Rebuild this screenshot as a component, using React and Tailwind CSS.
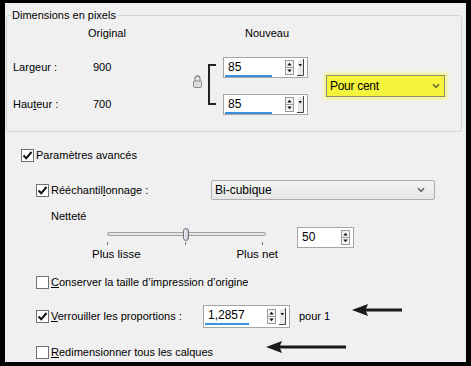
import React from "react";

function Check({ checked }) {
  return (
    <span className="w-[13px] h-[13px] border border-[#707070] bg-white flex items-center justify-center shrink-0">
      {checked && (
        <svg width="11" height="11" viewBox="0 0 11 11">
          <path d="M1.5 5.5 L4.2 8.3 L9.5 2" fill="none" stroke="#111" strokeWidth="2" />
        </svg>
      )}
    </span>
  );
}

function UpDown() {
  return (
    <svg width="9" height="15" viewBox="0 0 9 15" className="shrink-0">
      <rect x="0.5" y="0.5" width="8" height="14" fill="#f4f4f4" stroke="#9a9a9a" />
      <line x1="1" y1="7.5" x2="8" y2="7.5" stroke="#9a9a9a" />
      <path d="M2.3 5.5 L4.5 2.8 L6.7 5.5 Z" fill="#111" />
      <path d="M2.3 9.5 L6.7 9.5 L4.5 12.2 Z" fill="#111" />
    </svg>
  );
}

function DropBtn() {
  return (
    <svg width="7" height="17" viewBox="0 0 7 17" className="shrink-0">
      <rect x="0" y="0" width="7" height="17" fill="#e8e8e8" />
      <path d="M0.5 16 V0.5 H6" stroke="#fff" fill="none" />
      <path d="M6.5 0 V16.5 H0" stroke="#444" fill="none" />
      <path d="M1.5 5 L5 5 L3.25 7.5 Z" fill="#111" />
    </svg>
  );
}

function SpinBox({ value, className, bar, drop = true }) {
  return (
    <div className={`bg-white border border-[#a5a5a5] flex items-center ${className}`}>
      <div className="flex-1 flex flex-col self-stretch">
        <span className="pl-[4px] pt-[2px] leading-[15px] text-[12px]">{value}</span>
        {bar && <span className={`ml-[1px] h-[2px] bg-[#3b8ee0] ${bar}`} />}
      </div>
      <UpDown />
      {drop ? (
        <span className="ml-[3px] mr-[3px] flex">
          <DropBtn />
        </span>
      ) : (
        <span className="w-[3px]" />
      )}
    </div>
  );
}

function Chevron({ color }) {
  return (
    <svg width="8" height="6" viewBox="0 0 8 6">
      <path d="M1 1.2 L4 4.4 L7 1.2" fill="none" stroke={color} strokeWidth="1.6" />
    </svg>
  );
}

function Arrow({ className, length }) {
  return (
    <svg width={length} height="14" viewBox={`0 0 ${length} 14`} className={`absolute ${className}`}>
      <rect x="12" y="5.5" width={length - 12} height="3" fill="#1a1a1a" />
      <path d="M0 7 L16 1 L13.5 7 L16 13 Z" fill="#1a1a1a" />
    </svg>
  );
}

export default function App() {
  return (
    <div className="w-[471px] h-[366px] border-l-[5px] border-t-[3px] border-r-[5px] border-b-[4px] border-black bg-[#f0f0f0] text-[11px] text-black font-['Liberation_Sans',Arial,sans-serif] relative overflow-hidden">
      {/* Dimensions en pixels */}
      <div className="relative ml-[1px] mt-[12px] w-[456px] h-[117px] border border-[#d5d5d5] rounded-[3px]">
        <span className="absolute left-[4px] -top-[8px] px-[1px] bg-[#f0f0f0] leading-[14px]">Dimensions en pixels</span>

        <div className="mt-[10px] flex leading-[14px]">
          <span className="w-[238px] pl-[81px]">Original</span>
          <span>Nouveau</span>
        </div>

        <div className="mt-[17px] flex items-center h-[58px]">
          <div className="w-[86px] pl-[6px] flex flex-col gap-[16px]">
            <div className="h-[21px] flex items-center">
              <span>Lar<span className="underline">g</span>eur :</span>
            </div>
            <div className="h-[21px] flex items-center">
              <span>Hau<span className="underline">t</span>eur :</span>
            </div>
          </div>
          <div className="w-[100px] flex flex-col gap-[16px]">
            <div className="h-[21px] flex items-center">900</div>
            <div className="h-[21px] flex items-center">700</div>
          </div>
          <svg width="30" height="58" viewBox="0 0 30 58" className="shrink-0">
            <path d="M2 24 V21.5 a2.5 2.5 0 0 1 5 0 V24" fill="none" stroke="#8a8a8a" strokeWidth="1.3" />
            <rect x="0.5" y="24" width="8" height="6.5" rx="1" fill="#dcdcdc" stroke="#8a8a8a" />
            <path d="M23 8 H16 V47 H23" fill="none" stroke="#222" strokeWidth="2" />
          </svg>
          <div className="w-[85px] flex flex-col gap-[16px]">
            <SpinBox value="85" className="w-[85px] h-[21px]" bar="w-[47px]" />
            <SpinBox value="85" className="w-[85px] h-[21px]" bar="w-[47px]" />
          </div>
          <div className="ml-[18px] w-[119px] h-[22px] bg-[#f4f43c] border border-[#8c8c70] shadow-[0_0_3px_2px_#f6f68a] flex items-center justify-between pl-[3px] pr-[4px]">
            <span className="text-[12px] tracking-[-0.3px]">Pour cent</span>
            <Chevron color="#6b6b3a" />
          </div>
        </div>
      </div>

      {/* Paramètres avancés */}
      <div className="mt-[16px] ml-[16px] h-[14px] flex items-center gap-[2px] leading-[14px]">
        <Check checked />
        <span>Paramètres avancés</span>
      </div>

      <div className="mt-[18px] ml-[31px] h-[20px] flex items-center">
        <div className="w-[175px] flex items-center gap-[2px]">
          <Check checked />
          <span>Rééchantil<span className="underline">l</span>onnage :</span>
        </div>
        <div className="w-[224px] h-[20px] rounded-[2px] border border-[#acacac] bg-gradient-to-b from-[#f4f4f4] to-[#e6e6e6] flex items-center justify-between pl-[3px] pr-[9px]">
          <span className="text-[12px]">Bi-cubique</span>
          <Chevron color="#666" />
        </div>
      </div>

      <div className="mt-[9px] ml-[46px] h-[14px] leading-[14px]">Netteté</div>

      <div className="mt-[4px] ml-[85px] flex items-start">
        <div className="w-[190px]">
          <div className="relative h-[20px]">
            <div className="absolute left-[17px] top-[5px] w-[159px] h-[4px] rounded-full border border-[#a0a0a0] bg-[#e4e4e4]" />
            <div className="absolute left-[93px] top-[1px] w-[6px] h-[13px] rounded-full border border-[#70707e] bg-gradient-to-r from-[#f0f0f6] to-[#c8c8d4]" />
            <div className="absolute left-[17px] top-[15px] w-px h-[3px] bg-[#777]" />
            <div className="absolute left-[95px] top-[15px] w-px h-[3px] bg-[#777]" />
            <div className="absolute left-[172px] top-[15px] w-px h-[3px] bg-[#777]" />
          </div>
          <div className="flex justify-between leading-[14px] text-[11.5px] px-[2px]">
            <span>Plus lisse</span>
            <span>Plus net</span>
          </div>
        </div>
        <SpinBox value="50" className="ml-[17px] w-[57px] h-[21px]" drop={false} />
      </div>

      <div className="mt-[14px] ml-[31px] h-[14px] flex items-center gap-[2px] leading-[14px]">
        <Check />
        <span><span className="underline">C</span>onserver la taille d’impression d’origine</span>
      </div>

      <div className="mt-[16px] ml-[31px] h-[23px] flex items-center">
        <div className="w-[167px] flex items-center gap-[2px]">
          <Check checked />
          <span><span className="underline">V</span>errouiller les proportions :</span>
        </div>
        <SpinBox value="1,2857" className="w-[87px] h-[23px]" bar="w-[44px]" />
        <span className="ml-[9px]">pour 1</span>
      </div>

      <div className="mt-[17px] ml-[31px] h-[14px] flex items-center gap-[2px] leading-[14px]">
        <Check />
        <span><span className="underline">R</span>edimensionner tous les calques</span>
      </div>

      <Arrow className="left-[347px] top-[300px]" length={50} />
      <Arrow className="left-[261px] top-[337px]" length={80} />
    </div>
  );
}
